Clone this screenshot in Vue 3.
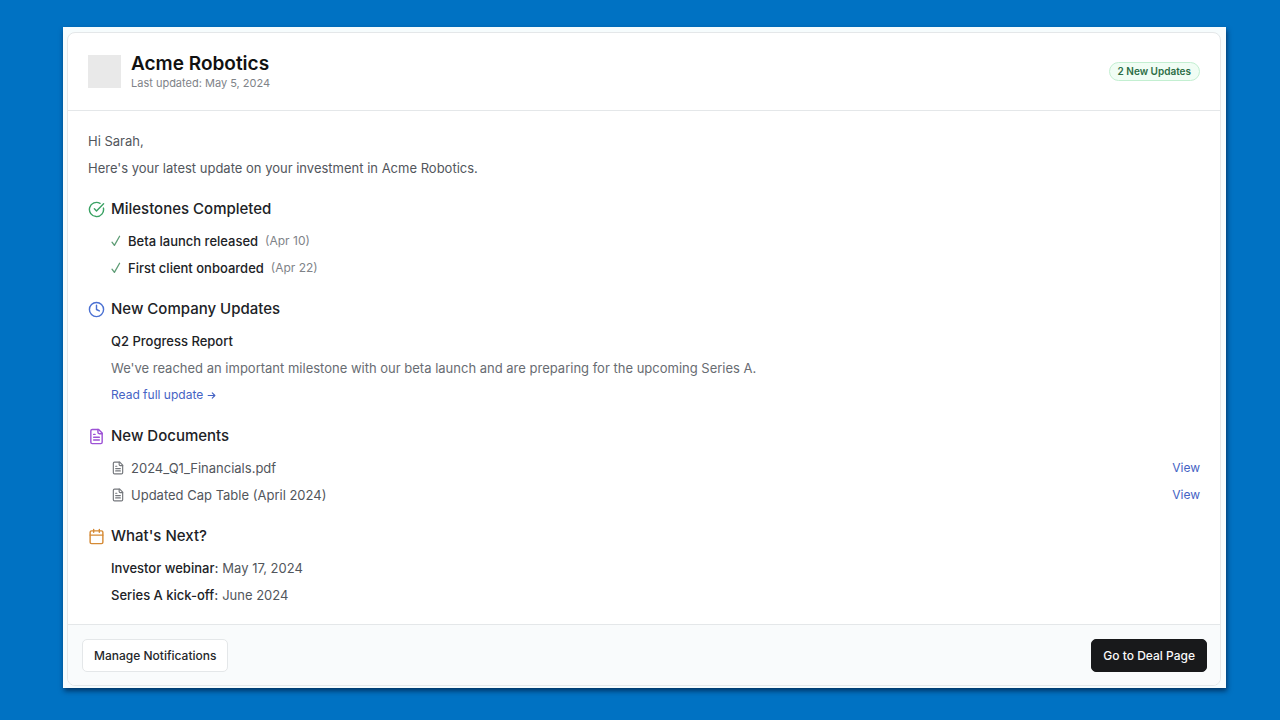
<script setup>
const milestones = [
  { title: 'Beta launch released', date: 'Apr 10' },
  { title: 'First client onboarded', date: 'Apr 22' },
]
const documents = ['2024_Q1_Financials.pdf', 'Updated Cap Table (April 2024)']
const upcoming = [
  { label: 'Investor webinar:', date: 'May 17, 2024' },
  { label: 'Series A kick-off:', date: 'June 2024' },
]
</script>

<template>
  <div class="page">
    <main class="frame">
      <article class="card">
        <header class="head">
          <div class="logo"></div>
          <div class="company">
            <h1>Acme Robotics</h1>
            <p>Last updated: May 5, 2024</p>
          </div>
          <span class="badge">2 New Updates</span>
        </header>

        <div class="body">
          <div class="rows intro">
            <p>Hi Sarah,</p>
            <p>Here's your latest update on your investment in Acme Robotics.</p>
          </div>

          <section>
            <h2>
              <svg class="icon green" viewBox="0 0 24 24"><path d="M21.8 10A10 10 0 1 1 17 3.34" /><path d="m9 11 3 3L22 4" /></svg>
              Milestones Completed
            </h2>
            <ul class="rows">
              <li v-for="m in milestones" :key="m.title">
                <svg class="tick" viewBox="0 0 10 12"><path d="M1 7.2 3.4 10.4 8.6 1.2" /></svg>
                <span class="strong">{{ m.title }}</span>
                <span class="date">({{ m.date }})</span>
              </li>
            </ul>
          </section>

          <section>
            <h2>
              <svg class="icon blue" viewBox="0 0 24 24"><circle cx="12" cy="12" r="10" /><path d="M12 6v6l4 2" /></svg>
              New Company Updates
            </h2>
            <div class="rows">
              <h3>Q2 Progress Report</h3>
              <p class="summary">We've reached an important milestone with our beta launch and are preparing for the upcoming Series A.</p>
              <a class="link" href="#update">
                Read full update
                <svg class="arrow" viewBox="0 0 24 24"><path d="M3 12h18M14 5l7 7-7 7" /></svg>
              </a>
            </div>
          </section>

          <section>
            <h2>
              <svg class="icon purple" viewBox="0 0 24 24"><path d="M15 2H6a2 2 0 0 0-2 2v16a2 2 0 0 0 2 2h12a2 2 0 0 0 2-2V7Z" /><path d="M14 2v4a2 2 0 0 0 2 2h4M10 9H8M16 13H8M16 17H8" /></svg>
              New Documents
            </h2>
            <ul class="rows">
              <li v-for="d in documents" :key="d">
                <svg class="file" viewBox="0 0 24 24"><path d="M15 2H6a2 2 0 0 0-2 2v16a2 2 0 0 0 2 2h12a2 2 0 0 0 2-2V7Z" /><path d="M14 2v4a2 2 0 0 0 2 2h4M10 9H8M16 13H8M16 17H8" /></svg>
                <span>{{ d }}</span>
                <a class="link view" href="#document" :aria-label="'View ' + d">View</a>
              </li>
            </ul>
          </section>

          <section>
            <h2>
              <svg class="icon orange" viewBox="0 0 24 24"><path d="M8 2v4M16 2v4M3 10h18" /><rect x="3" y="4" width="18" height="18" rx="2" /></svg>
              What's Next?
            </h2>
            <ul class="rows next">
              <li v-for="u in upcoming" :key="u.label">
                <span class="strong">{{ u.label }}</span>
                <span>{{ u.date }}</span>
              </li>
            </ul>
          </section>
        </div>

        <footer class="foot">
          <button type="button" class="btn">Manage Notifications</button>
          <button type="button" class="btn primary">Go to Deal Page</button>
        </footer>
      </article>
    </main>
  </div>
</template>

<style>
body { background: #0072c3; }
</style>

<style scoped>
* { box-sizing: border-box; }
.page {
  min-height: 100vh;
  padding: 27px 54px 32px 63px;
  background: #0072c3;
  font-family: Inter, "Liberation Sans", sans-serif;
  font-size: 13px;
  line-height: 20px;
  color: #52565c;
}
h1, h2, h3, p, ul { margin: 0; padding: 0; }
ul { list-style: none; }
svg { fill: none; stroke: currentColor; stroke-width: 2; stroke-linecap: round; stroke-linejoin: round; flex: none; }
.frame {
  padding: 5px 5px 2px 4px;
  background: #f6fcfd;
  box-shadow: 1px 3px 5px rgba(0, 20, 50, 0.65);
}
.card {
  border: 1px solid #e4e7e9;
  border-radius: 8px;
  background: #fff;
  overflow: hidden;
}
.head {
  display: flex;
  align-items: center;
  gap: 10px;
  height: 78px;
  padding: 0 20px;
  border-bottom: 1px solid #e4e7e9;
}
.logo { width: 33px; height: 33px; background: #e9e9e9; }
h1 { font-size: 19px; line-height: 22px; font-weight: 600; color: #111; }
.company p { font-size: 11px; line-height: 16px; color: #808388; }
.badge {
  margin-left: auto;
  padding: 0 8px;
  border: 1px solid #c3efd1;
  border-radius: 10px;
  background: #f0fdf4;
  color: #2c6e46;
  font-size: 10px;
  line-height: 17px;
  font-weight: 600;
}
.body { display: flex; flex-direction: column; gap: 20px; padding: 20px 20px 19px; }
.rows { display: flex; flex-direction: column; gap: 7px; }
section .rows { padding: 11px 0 0 23px; }
li { display: flex; align-items: center; }
h2 {
  display: flex;
  align-items: center;
  gap: 6px;
  font-size: 15px;
  line-height: 22px;
  font-weight: 500;
  color: #202226;
}
h3 { font-size: 13px; font-weight: 500; color: #202226; }
.icon { width: 17px; height: 17px; }
.green { color: #3ba264; }
.blue { color: #4a70d2; }
.purple { color: #9d52d5; }
.orange { color: #d58a35; }
.tick { width: 10px; height: 12px; margin-right: 7px; color: #5f9d76; stroke-width: 1.3; }
.strong { font-weight: 500; color: #202226; }
.date { margin-left: 7px; font-size: 12px; color: #808388; }
.summary { color: #686c72; }
.link { font-size: 12px; color: #4563c4; text-decoration: none; }
.rows > .link { display: flex; align-items: center; gap: 4px; align-self: flex-start; }
.arrow { width: 9px; height: 9px; stroke-width: 3; }
.file { width: 14px; height: 14px; margin-right: 6px; color: #74777c; }
.view { margin-left: auto; }
.next li { gap: 4px; }
.foot {
  display: flex;
  align-items: center;
  justify-content: space-between;
  height: 61px;
  padding: 0 13px 0 14px;
  border-top: 1px solid #e4e7e9;
  background: #f9fbfc;
}
.btn {
  height: 33px;
  padding: 0 11px;
  border: 1px solid #e4e7e9;
  border-radius: 5px;
  background: #fff;
  color: #25272a;
  font-family: inherit;
  font-size: 12px;
  font-weight: 500;
}
.primary { border-color: #18191b; background: #18191b; color: #fafafa; }
</style>
